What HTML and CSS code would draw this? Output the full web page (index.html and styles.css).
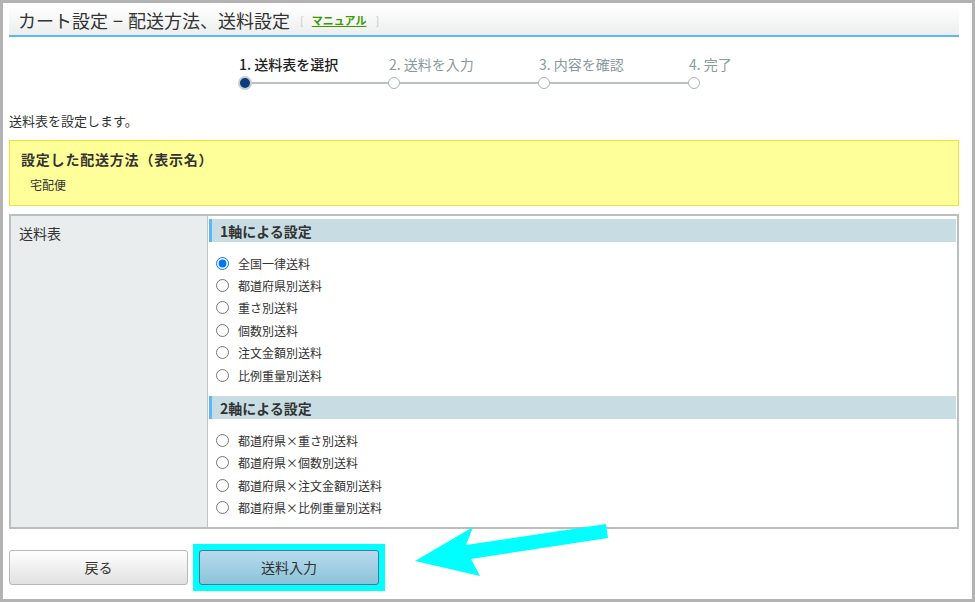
FILE: index.html
```html
<!DOCTYPE html>
<html lang="ja">
  <head>
    <meta charset="UTF-8" />
    <meta name="viewport" content="width=device-width, initial-scale=1.0" />
    <title>カート設定</title>
    <link rel="stylesheet" href="styles.css">
  </head>
  <body>
    <div class="frame">
      <div class="pageHead">
        <h1>カート設定 − 配送方法、送料設定</h1>
        <span class="manual"><span class="br">[</span><a href="#">マニュアル</a><span class="br">]</span></span>
      </div>

      <div class="steps">
        <div class="step on">
          <div class="stepName">1. 送料表を選択</div>
          <div class="dotRow"><span class="dot"></span><span class="line"></span></div>
        </div>
        <div class="step">
          <div class="stepName">2. 送料を入力</div>
          <div class="dotRow"><span class="dot"></span><span class="line"></span></div>
        </div>
        <div class="step">
          <div class="stepName">3. 内容を確認</div>
          <div class="dotRow"><span class="dot"></span><span class="line"></span></div>
        </div>
        <div class="step last">
          <div class="stepName">4. 完了</div>
          <div class="dotRow"><span class="dot"></span></div>
        </div>
      </div>

      <p class="intro">送料表を設定します。</p>

      <div class="noticeBox">
        <div class="noticeTitle">設定した配送方法（表示名）</div>
        <div class="noticeText">宅配便</div>
      </div>

      <div class="formTable">
        <div class="th">送料表</div>
        <div class="td">
          <div class="secHead">1軸による設定</div>
          <ul class="radioList">
            <li><label><input type="radio" name="tbl" checked />全国一律送料</label></li>
            <li><label><input type="radio" name="tbl" />都道府県別送料</label></li>
            <li><label><input type="radio" name="tbl" />重さ別送料</label></li>
            <li><label><input type="radio" name="tbl" />個数別送料</label></li>
            <li><label><input type="radio" name="tbl" />注文金額別送料</label></li>
            <li><label><input type="radio" name="tbl" />比例重量別送料</label></li>
          </ul>
          <div class="secHead">2軸による設定</div>
          <ul class="radioList lastList">
            <li><label><input type="radio" name="tbl" />都道府県×重さ別送料</label></li>
            <li><label><input type="radio" name="tbl" />都道府県×個数別送料</label></li>
            <li><label><input type="radio" name="tbl" />都道府県×注文金額別送料</label></li>
            <li><label><input type="radio" name="tbl" />都道府県×比例重量別送料</label></li>
          </ul>
        </div>
      </div>

      <div class="btnArea">
        <button class="btn back">戻る</button>
        <span class="mark"><button class="btn next">送料入力</button></span>
      </div>

      <svg class="arrow" width="975" height="602" viewBox="0 0 975 602">
        <polygon points="415,561 473,527 466,545 606,524 608,538 471,559 480,576" fill="#00ffff" />
      </svg>
    </div>
  </body>
</html>
```

FILE: styles.css
```css
* {
  box-sizing: border-box;
}
body {
  margin: 0;
  font-family: "Noto Sans CJK JP", "Liberation Sans", sans-serif;
  color: #333;
  font-size: 12px;
}
.frame {
  position: relative;
  width: 975px;
  height: 602px;
  border: 3px solid #b3b3b3;
  padding: 3px 13px 0 6px;
  background: #fff;
  overflow: hidden;
}
.pageHead {
  display: flex;
  align-items: center;
  height: 31px;
  padding-left: 9px;
  background: linear-gradient(#ffffff, #eceeee);
  border-bottom: 2px solid #5bb8f5;
}
.pageHead h1 {
  margin: 0;
  font-size: 18px;
  font-weight: normal;
  line-height: 29px;
  color: #333;
  word-spacing: 1px;
}
.manual {
  margin-left: 10px;
  font-size: 11px;
  line-height: 29px;
}
.manual .br {
  color: #c8c8c8;
}
.manual a {
  margin: 0 9px 0 8px;
  color: #3c9a00;
  font-weight: bold;
  text-decoration: underline;
}
.steps {
  display: flex;
  margin: 20px 0 0 229px;
}
.step {
  width: 150px;
}
.step.last {
  width: auto;
}
.stepName {
  font-size: 14px;
  line-height: 14px;
  color: #8a9a9c;
  padding-left: 1px;
  white-space: nowrap;
}
.step.on .stepName {
  color: #222;
  font-weight: 500;
}
.dotRow {
  display: flex;
  align-items: center;
  height: 14px;
  margin-top: 5px;
}
.dot {
  width: 12px;
  height: 12px;
  border: 1px solid #a9b2b2;
  border-radius: 50%;
  background: #fff;
  flex: none;
}
.step.on .dot {
  width: 14px;
  height: 14px;
  background: #0c3c7a;
  border: 2px solid #c9cdcd;
}
.line {
  flex: 1;
  height: 2px;
  background: #b9c1c1;
}
.intro {
  margin: 23px 0 0;
  font-size: 13px;
  line-height: 15px;
}
.noticeBox {
  margin-top: 12px;
  border: 1px solid #f3e23c;
  background: #ffff99;
  padding: 8px 11px 10px;
}
.noticeTitle {
  font-size: 14px;
  font-weight: bold;
  line-height: 20px;
  letter-spacing: 0.8px;
}
.noticeText {
  margin-top: 6px;
  padding-left: 9px;
  line-height: 20px;
}
.formTable {
  display: flex;
  margin-top: 8px;
  border: 2px solid #b8bfbd;
}
.th {
  width: 197px;
  background: #e9eded;
  border-right: 1px solid #c0c5c4;
  padding: 9px 8px;
  font-size: 14px;
  line-height: 16px;
}
.td {
  flex: 1;
  padding: 3px 1px 0 1px;
}
.secHead {
  height: 23px;
  line-height: 24px;
  background: #c7dde3;
  border-left: 3px solid #5bb8f5;
  padding-left: 8px;
  font-size: 14px;
  font-weight: bold;
}
.radioList {
  list-style: none;
  margin: 0;
  padding: 10px 0;
}
.radioList.lastList {
  padding-bottom: 8px;
}
.radioList li {
  height: 22.4px;
  display: flex;
  align-items: center;
}
.radioList label {
  display: flex;
  align-items: center;
}
.radioList input {
  width: 13px;
  height: 13px;
  margin: 0 9px 0 7px;
}
.btnArea {
  display: flex;
  align-items: flex-start;
  margin-top: 15px;
}
.btn {
  width: 180px;
  height: 35px;
  border-radius: 3px;
  font-family: inherit;
  font-size: 14px;
  color: #333;
}
.btn.back {
  width: 179px;
  margin-top: 6px;
  background: linear-gradient(#ffffff, #e1e1e1);
  border: 1px solid #b8b8b8;
}
.mark {
  display: flex;
  margin-left: 5px;
  padding: 6px;
  background: #00ffff;
}
.btn.next {
  background: linear-gradient(#b7dbef, #8cc3d8);
  border: 1px solid #4f7597;
}
.arrow {
  position: absolute;
  left: -3px;
  top: -3px;
  pointer-events: none;
}
```
